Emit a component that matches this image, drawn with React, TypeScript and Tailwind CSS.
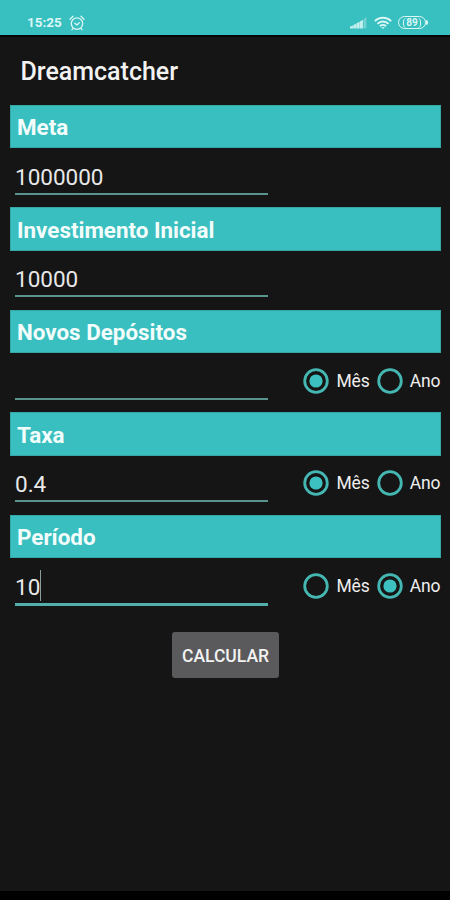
import { useState } from "react";

type Unit = "mes" | "ano";

function StatusBar() {
  return (
    <div className="h-[35px] bg-[#38bfc0] flex items-start justify-between pt-[13px] pl-[27px] pr-[22px] text-[#dcf7f5]">
      <div className="flex items-center gap-[7px] h-[19px]">
        <span className="text-[13.5px] leading-none font-bold">15:25</span>
        <svg className="w-4 h-4" viewBox="0 0 16 16" fill="none" stroke="currentColor" strokeWidth="1.3" strokeLinecap="round" strokeLinejoin="round">
          <circle cx="8" cy="8.6" r="5.7" />
          <path d="M1 4.2L4 1.3M15 4.2L12 1.3M5.8 8.2L7.9 10L10.3 7.8M4 13.4L3 14.7M12 13.4L13 14.7" />
        </svg>
      </div>

      <div className="flex items-center h-[19px]">
        <svg className="w-[17px] h-[13px]" viewBox="0 0 17 13" fill="currentColor">
          <path d="M0 12.5V10.5L3 9.5V12.5ZM3.3 12.5V9L6.3 7.7V12.5ZM6.6 12.5V7.3L9.6 5.8V12.5ZM9.9 12.5V5.4L12.9 3.8V12.5Z" opacity="0.85" />
          <path d="M13.4 12.5V3.3L16.4 1V12.5Z" opacity="0.35" />
        </svg>
        <svg className="w-[18px] h-[14px] ml-[7px]" viewBox="0 0 18 14" fill="none" stroke="currentColor" strokeWidth="1.9">
          <path d="M0.8 5.2C5.3 0.6 12.7 0.6 17.2 5.2" />
          <path d="M3.4 7.8C6.5 4.7 11.5 4.7 14.6 7.8" />
          <path d="M6 10.2C7.7 8.6 10.3 8.6 12 10.2" />
          <path d="M7.3 11.2H10.7L9 13Z" fill="currentColor" stroke="none" />
        </svg>
        <div className="ml-[6px] w-[28px] h-[13px] rounded-full border-[1.5px] border-current flex items-center justify-center">
          <span className="border-x border-current rounded-sm px-[2px] text-[10px] leading-[10px] font-bold">89</span>
        </div>
        <span className="w-[2px] h-[5px] rounded-r-sm bg-current" />
      </div>
    </div>
  );
}

function Radio({ label, checked, onClick }: { label: string; checked: boolean; onClick: () => void }) {
  return (
    <button type="button" role="radio" aria-checked={checked} onClick={onClick} className="flex items-center">
      <svg className="w-[26px] h-[26px]" viewBox="0 0 26 26">
        <circle cx="13" cy="13" r="11.3" fill="none" stroke="#45b7b3" strokeWidth="2.8" />
        {checked && <circle cx="13" cy="13" r="6.6" fill="#3dc1c0" />}
      </svg>
      <span className="ml-[7px] pt-px text-[17.5px] leading-none tracking-[-0.1px] text-[#eeeeee]">{label}</span>
    </button>
  );
}

interface FieldProps {
  title: string;
  value: string;
  focused?: boolean;
  unit?: Unit;
  onUnit?: (unit: Unit) => void;
}

function Field({ title, value, focused, unit, onUnit }: FieldProps) {
  return (
    <section className="h-[102.5px]">
      <h2 className="h-[43.5px] bg-[#3abfc0] border border-[#35a7a7] pl-[6px] flex items-center text-[22.4px] font-bold text-[#f3fdfc]">
        <span className="pt-[3px]">{title}</span>
      </h2>
      <div className="flex items-start justify-between pl-[5px]">
        <div
          className={
            focused
              ? "w-[253px] h-[47.5px] border-b-[3px] border-[#52b0aa] flex items-center"
              : "w-[253px] h-[46.5px] border-b-2 border-[#58938d] flex items-center"
          }
        >
          <span className="pt-[12px] text-[22.5px] leading-8 text-[#e8e8e8]">{value}</span>
          {focused && <span className="mt-[9px] w-px h-[31px] bg-[#8b9c9c]" />}
        </div>
        {unit && onUnit && (
          <div role="radiogroup" className="flex items-center gap-[7px] pt-[14.5px] pr-[0.5px]">
            <Radio label="Mês" checked={unit === "mes"} onClick={() => onUnit("mes")} />
            <Radio label="Ano" checked={unit === "ano"} onClick={() => onUnit("ano")} />
          </div>
        )}
      </div>
    </section>
  );
}

export default function App() {
  const [deposit, setDeposit] = useState<Unit>("mes");
  const [rate, setRate] = useState<Unit>("mes");
  const [period, setPeriod] = useState<Unit>("ano");

  return (
    <div className="w-[450px] h-[900px] overflow-hidden bg-[#151515] flex flex-col font-[Roboto,sans-serif]">
      <StatusBar />
      <div className="h-[2px] bg-[#050505]" />

      <header className="h-[67.8px] pl-[20.5px] pt-[2px] flex items-center">
        <h1 className="text-[25px] font-medium text-[#f2f2f2]">Dreamcatcher</h1>
      </header>

      <main className="flex-1 pl-[10px] pr-[9px]">
        <Field title="Meta" value="1000000" />
        <Field title="Investimento Inicial" value="10000" />
        <Field title="Novos Depósitos" value="" unit={deposit} onUnit={setDeposit} />
        <Field title="Taxa" value="0.4" unit={rate} onUnit={setRate} />
        <Field title="Período" value="10" focused unit={period} onUnit={setPeriod} />

        <div className="flex justify-center pt-[14.6px]">
          <button type="button" className="w-[107px] h-[46px] pt-[2px] rounded-[3px] bg-[#5a5a5c] text-[17.5px] font-medium text-[#f2f2f2]">
            CALCULAR
          </button>
        </div>
      </main>

      {/* System navigation strip */}
      <div className="h-[9px] bg-black" />
    </div>
  );
}
